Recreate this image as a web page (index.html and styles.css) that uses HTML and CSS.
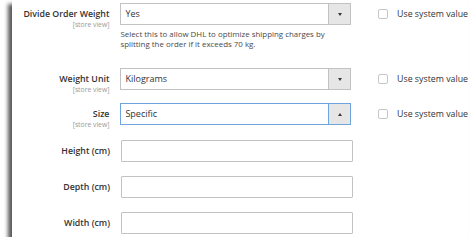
FILE: index.html
```html
<!DOCTYPE html>
<html lang="en">
<head>
  <meta charset="UTF-8">
  <title>DHL Settings</title>
  <link rel="stylesheet" href="styles.css">
</head>
<body>
  <div class="card">
    <div class="row">
      <div class="label-cell">
        <div class="label">Divide Order Weight</div>
        <div class="scope">[store view]</div>
      </div>
      <div class="control">
        <div class="select"><span class="select-value">Yes</span><span class="select-btn"><span class="arrow"></span></span></div>
        <div class="note">Select this to allow DHL to optimize shipping charges by splitting the order if it exceeds 70 kg.</div>
      </div>
      <label class="use-default"><span class="checkbox"></span>Use system value</label>
    </div>

    <div class="row row-unit">
      <div class="label-cell">
        <div class="label">Weight Unit</div>
        <div class="scope">[store view]</div>
      </div>
      <div class="control">
        <div class="select"><span class="select-value">Kilograms</span><span class="select-btn"><span class="arrow"></span></span></div>
      </div>
      <label class="use-default"><span class="checkbox"></span>Use system value</label>
    </div>

    <div class="row row-size">
      <div class="label-cell">
        <div class="label">Size</div>
        <div class="scope">[store view]</div>
      </div>
      <div class="control">
        <div class="select focused"><span class="select-value">Specific</span><span class="select-btn"><span class="arrow up"></span></span></div>
      </div>
      <label class="use-default"><span class="checkbox"></span>Use system value</label>
    </div>

    <div class="row row-dim">
      <div class="label-cell"><div class="label">Height (cm)</div></div>
      <div class="control"><input type="text" class="input"></div>
    </div>

    <div class="row row-dim">
      <div class="label-cell"><div class="label">Depth (cm)</div></div>
      <div class="control"><input type="text" class="input"></div>
    </div>

    <div class="row row-dim">
      <div class="label-cell"><div class="label">Width (cm)</div></div>
      <div class="control"><input type="text" class="input"></div>
    </div>
  </div>
</body>
</html>
```

FILE: styles.css
```css
* {
  box-sizing: border-box;
}

html, body {
  margin: 0;
  padding: 0;
  background: #fff;
  font-family: 'Open Sans', sans-serif;
  color: #333;
}

.card {
  margin-left: 12px;
  width: 456px;
  padding: 3px 0 3px;
  background: #fff;
  box-shadow: -4px 4px 4px rgba(0, 0, 0, 0.65);
}

.row {
  display: flex;
  align-items: flex-start;
}

.row-unit {
  margin-top: 19px;
}

.row-size {
  margin-top: 13px;
}

.row-dim {
  margin-top: 14px;
}

.row-size + .row-dim {
  margin-top: 15px;
}

.label-cell {
  width: 98px;
  height: 22px;
  padding-top: 4px;
  text-align: right;
  white-space: nowrap;
}

.label {
  font-size: 8.8px;
  font-weight: 600;
  line-height: 14px;
  color: #333;
}

.scope {
  font-size: 6.8px;
  line-height: 8px;
  color: #999;
}

.control {
  width: 232px;
  margin-left: 11px;
}

.select {
  display: flex;
  height: 22px;
  border: 1px solid #c2c2c2;
  background: #fff;
}

.select-value {
  flex: 1;
  padding-left: 4px;
  font-size: 9px;
  line-height: 20px;
  color: #333;
}

.select-btn {
  width: 22px;
  display: flex;
  align-items: center;
  justify-content: center;
  background: #e6e6e6;
  border-left: 1px solid #c2c2c2;
}

.arrow {
  width: 0;
  height: 0;
  border-left: 2.5px solid transparent;
  border-right: 2.5px solid transparent;
  border-top: 3px solid #41362f;
}

.arrow.up {
  border-top: 0;
  border-bottom: 3px solid #41362f;
}

.select.focused,
.select.focused .select-btn {
  border-color: #6ea5dc;
}

.note {
  margin-top: 5px;
  padding-right: 16px;
  font-size: 7.9px;
  line-height: 9.5px;
  color: #4a4a4a;
}

.input {
  display: block;
  width: 100%;
  height: 22px;
  margin: 0;
  padding: 0 4px;
  border: 1px solid #c2c2c2;
  border-radius: 1px;
  font-family: inherit;
  font-size: 9px;
  background: #fff;
}

.use-default {
  display: flex;
  align-items: center;
  height: 22px;
  margin-left: 27px;
  font-size: 8.8px;
  color: #333;
  white-space: nowrap;
}

.checkbox {
  width: 10px;
  height: 10px;
  margin-right: 9px;
  border: 1px solid #c6c6c6;
  border-radius: 2px;
  background: #fff;
}
```
